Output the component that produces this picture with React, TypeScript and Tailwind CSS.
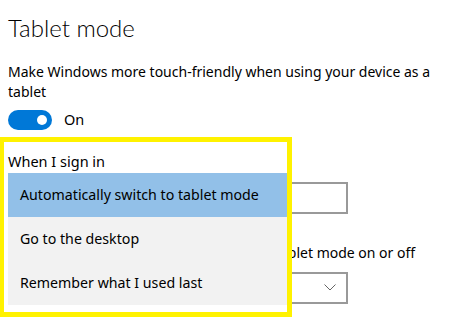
import { useState } from "react";

const options = [
  "Automatically switch to tablet mode",
  "Go to the desktop",
  "Remember what I used last",
];

function Toggle({ on }: { on: boolean }) {
  return (
    <div className="flex items-center gap-3">
      <div className="w-[44px] h-[20px] rounded-full bg-[#0078d7] flex items-center justify-end px-[5px]">
        <div className="w-[10px] h-[10px] rounded-full bg-white" />
      </div>
      <span className="text-[14.5px]">{on ? "On" : "Off"}</span>
    </div>
  );
}

export default function App() {
  const [selected] = useState(0);

  return (
    <div
      className="relative w-[449px] h-[322px] bg-white text-black overflow-hidden"
      style={{ fontFamily: '"Noto Sans", sans-serif' }}
    >
      <div className="pl-2 pr-1 pt-[10px]">
        <h1
          className="text-[24px] leading-[35px] font-light"
          style={{ fontFamily: 'Lato, "Noto Sans", sans-serif' }}
        >
          Tablet mode
        </h1>
        <p className="mt-[17px] text-[14px] leading-[20px]">
          Make Windows more touch-friendly when using your device as a tablet
        </p>
        <div className="mt-[7px]">
          <Toggle on={true} />
        </div>
        <div className="mt-[25px] text-[14.5px] leading-[20px]">When I sign in</div>
        <div className="mt-[6px] w-[340px] h-[32px] border-2 border-[#999]" />
        <div className="mt-[29px] text-[14px] leading-[20px]">
          When this device automatically switches tablet mode on or off
        </div>
        <div className="mt-[9px] w-[340px] h-[32px] border-2 border-[#999] flex items-center justify-end pr-[10px]">
          <svg width="12" height="7" viewBox="0 0 12 7" fill="none">
            <path d="M0.5 0.5 L6 6 L11.5 0.5" stroke="#666" strokeWidth="1" />
          </svg>
        </div>
      </div>

      {/* highlighted open dropdown */}
      <div className="absolute left-0 top-[137px] w-[292px] h-[180px] border-[5px] border-l-4 border-[#fff200] bg-white pl-1 flex flex-col">
        <div className="text-[14.5px] leading-[20px] mt-[9px]">When I sign in</div>
        <div className="mt-[2px] bg-[#f2f2f2]">
          {options.map((o, i) => (
            <div
              key={o}
              className={`h-[44px] flex items-center px-3 text-[14.2px] ${
                i === selected ? "bg-[#92c0e8]" : ""
              }`}
            >
              {o}
            </div>
          ))}
        </div>
      </div>
    </div>
  );
}
